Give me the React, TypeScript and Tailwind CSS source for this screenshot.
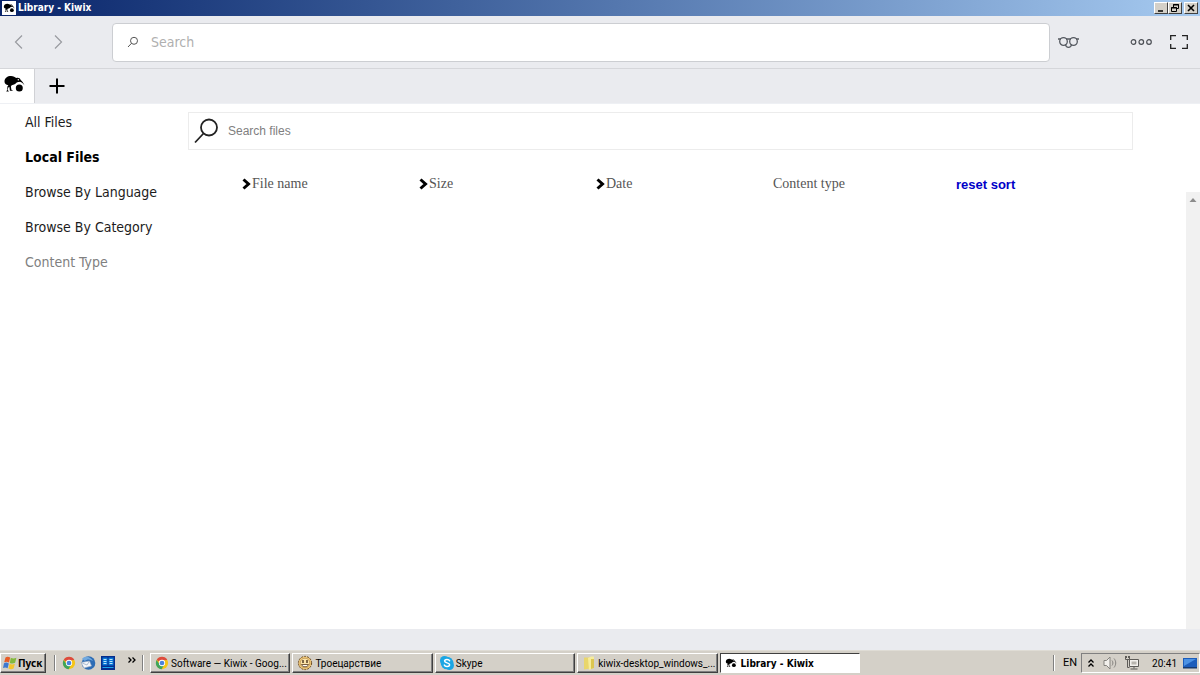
import { useState, type ReactNode } from 'react';

const SECTIONS = ['All Files', 'Local Files', 'Browse By Language', 'Browse By Category'];
const COLUMNS = ['File name', 'Size', 'Date'];

function KiwiIcon({ className }: { className?: string }) {
  return (
    <svg viewBox="0 0 22 18" className={className} aria-hidden="true">
      <path
        d="M1.500 6.500C1.500 3 4.500 1 8 1c2.500 0 4 1.600 5.500 2 1.500-.6 3.600 0 4.200 2 1.500 1.200 2.800 3 3.800 5.500-1.500-2-2.700-3.200-4.500-3.700-1.300.4-2.300 0-3.300.8C12.500 9 11 10 8.700 10.200l-.8 1.400.5 3.100 1.800 1H6.900l-.5-3.800-1.200.6-.5 2.600 1.300 1.400H3.200l1-1.500.2-3.500 1-1.300C3 9.500 1.500 8.800 1.500 6.500z"
        fill="#000"
      />
      <circle cx="16.300" cy="13" r="3.500" fill="#000" />
      <circle cx="15.300" cy="4.800" r="0.700" fill="#fff" />
    </svg>
  );
}

function ChromeIcon({ className }: { className?: string }) {
  return (
    <svg viewBox="0 0 16 16" className={className} aria-hidden="true">
      <circle cx="8" cy="8" r="7" fill="#f5c518" />
      <path d="M8 8 1.900 4.500A7 7 0 0 1 14.100 4.500L8 5z" fill="#dd4b3e" />
      <path d="M1.900 4.500A7 7 0 0 0 7.500 15L10.500 10 8 8 5 9z" fill="#3fa45b" />
      <circle cx="8" cy="8" r="3.600" fill="#fff" />
      <circle cx="8" cy="8" r="2.700" fill="#4a83dc" />
    </svg>
  );
}

function MonkeyIcon() {
  return (
    <svg viewBox="0 0 16 16" className="size-4 shrink-0" aria-hidden="true">
      <circle cx="8" cy="8" r="6.600" fill="#f0c878" stroke="#6b4a20" strokeWidth="1" strokeDasharray="2 1" />
      <circle cx="8" cy="8" r="4.800" fill="#fbe3a8" stroke="#a57a3a" strokeWidth="0.600" />
      <path d="M6 5v3M10 5v3" stroke="#3c2610" strokeWidth="1.300" />
      <path d="M4.500 9.500c1 3 6 3 7 0z" fill="#fff" stroke="#5b3a18" strokeWidth="0.800" />
    </svg>
  );
}

function SkypeIcon() {
  return (
    <svg viewBox="1 1 14 14" className="size-3.5 shrink-0" aria-hidden="true">
      <circle cx="5.500" cy="5.500" r="4.500" fill="#1ba6e4" />
      <circle cx="10.500" cy="10.500" r="4.500" fill="#1ba6e4" />
      <circle cx="8" cy="8" r="6.300" fill="#1ba6e4" />
      <path d="M10.600 5.800C10 4 5.600 3.900 5.600 6.100c0 2.200 5 1.300 5 3.700 0 2.300-4.600 2.300-5.300.3" fill="none" stroke="#fff" strokeWidth="1.500" strokeLinecap="round" />
    </svg>
  );
}

function FolderIcon() {
  return (
    <svg viewBox="0 1 14 14" className="size-3.5 shrink-0" aria-hidden="true">
      <path d="M2 2.500h6v11l-6 1z" fill="#e9d66b" />
      <path d="M6 3l3-1.500h3V13l-5 2z" fill="#f6ec9c" />
      <path d="M9 4h3v9l-3 1z" fill="#dcc650" />
    </svg>
  );
}

function SortArrow() {
  return (
    <svg viewBox="0 0 10 12" className="h-3 w-2.5 shrink-0" aria-hidden="true">
      <path d="M1.500 1.500 6.500 6 1.500 10.500" fill="none" stroke="#000" strokeWidth="3" />
    </svg>
  );
}

function CaptionButton({ label, children }: { label: string; children: ReactNode }) {
  return (
    <button
      aria-label={label}
      className="flex h-3 w-3.5 items-center justify-center border border-t-white border-r-[#404040] border-b-[#404040] border-l-white bg-[#d4d0c8]"
    >
      <svg viewBox="0 0 12 10" className="h-2.5 w-3 shrink-0" fill="none" stroke="#000" aria-hidden="true">
        {children}
      </svg>
    </button>
  );
}

interface TaskProps {
  label: string;
  icon: ReactNode;
  active?: boolean;
}

function Task({ label, icon, active }: TaskProps) {
  return (
    <button
      className={
        active
          ? "flex h-5 items-center gap-1 border border-t-[#404040] border-r-white border-b-white border-l-[#404040] bg-white px-1 text-left font-['DejaVu_Sans_Condensed','DejaVu_Sans',sans-serif] font-bold"
          : 'flex h-5 items-center gap-0.5 border border-t-white border-r-[#404040] border-b-[#404040] border-l-white bg-[#d4d0c8] pl-1 text-left shadow-[inset_-1px_-1px_0_#808080]'
      }
    >
      {icon}
      <span className="whitespace-nowrap">{label}</span>
    </button>
  );
}

function Separator() {
  return <div className="h-4 w-0.5 shrink-0 border-r border-l border-r-white border-l-[#808080]" />;
}

export default function App() {
  const [section, setSection] = useState('Local Files');
  const [query, setQuery] = useState('');

  return (
    <div className="flex min-h-screen flex-col bg-white font-['DejaVu_Sans_Condensed','DejaVu_Sans',sans-serif]">
      {/* Title bar */}
      <header className="flex h-4 items-center bg-linear-to-r from-[#0a246a] to-[#a6caf0] px-0.5">
        <div className="flex size-3.5 items-center justify-center bg-white">
          <KiwiIcon className="h-2.5 w-3" />
        </div>
        <h1 className="flex-1 pl-0.5 text-[10px] leading-4 font-bold text-white">Library - Kiwix</h1>
        <div className="flex">
          <CaptionButton label="Minimize">
            <path d="M3 8h5" strokeWidth="1.500" />
          </CaptionButton>
          <CaptionButton label="Restore">
            <path d="M4.500 4V1.500h5v4H8M4 2h6M2.500 4.500h5v4h-5zM2 5h6" />
          </CaptionButton>
          <div className="w-0.5" />
          <CaptionButton label="Close">
            <path d="M3 2l6 6M9 2 3 8" strokeWidth="1.600" />
          </CaptionButton>
        </div>
      </header>

      {/* Toolbar */}
      <div className="flex h-[53px] items-center border-b border-[#d5d6da] bg-[#eaebef]">
        <div className="flex w-28 shrink-0 gap-4 pl-2">
          <button aria-label="Back" className="flex size-6 items-center justify-center">
            <svg viewBox="0 0 24 24" className="size-6" fill="none" stroke="#999ba0" aria-hidden="true">
              <path d="M14 5.500 7.500 12l6.500 6.500" strokeWidth="1.200" />
            </svg>
          </button>
          <button aria-label="Forward" className="flex size-6 items-center justify-center">
            <svg viewBox="0 0 24 24" className="size-6" fill="none" stroke="#999ba0" aria-hidden="true">
              <path d="M7 5.500 13.500 12 7 18.500" strokeWidth="1.200" />
            </svg>
          </button>
        </div>
        <label className="flex h-[39px] flex-1 items-center gap-3 rounded-sm border border-[#ccced2] bg-white pl-3.5">
          <svg viewBox="0 0 12 12" className="size-3 shrink-0" fill="none" stroke="#555" aria-hidden="true">
            <circle cx="7" cy="4.800" r="3.500" />
            <path d="M4.500 7.300 1 11" />
          </svg>
          <input
            type="text"
            aria-label="Search"
            placeholder="Search"
            className="min-w-0 flex-1 bg-transparent text-sm outline-none placeholder:text-[#b0b0b0]"
          />
        </label>
        <div className="flex w-[150px] shrink-0 items-center pl-2">
          <button aria-label="Reading list">
            <svg viewBox="0 0 22 14" className="h-3.5 w-[22px]" fill="none" stroke="#555960" strokeWidth="1.300" aria-hidden="true">
              <circle cx="5.500" cy="6.500" r="3.800" />
              <circle cx="15.500" cy="6.500" r="3.800" />
              <path d="M0 4h3M18 4h3M8 4h5M7.500 9.500c.5 3.800 5.500 3.800 6 0" />
            </svg>
          </button>
          <button aria-label="Menu" className="mr-4 ml-auto">
            <svg viewBox="0 0 24 8" className="h-2 w-6" fill="none" stroke="#4b4e54" strokeWidth="1.200" aria-hidden="true">
              <circle cx="3.500" cy="4" r="2.300" />
              <circle cx="11.300" cy="4" r="2.300" />
              <circle cx="19" cy="4" r="2.300" />
            </svg>
          </button>
          <button aria-label="Full screen" className="mr-3">
            <svg viewBox="0 0 18 14" className="h-3.5 w-[18px]" fill="none" stroke="#222" strokeWidth="1.300" aria-hidden="true">
              <path d="M.7 5V.7H6M12 .7h5.300V5M17.300 9v4.300H12M6 13.300H.7V9" />
            </svg>
          </button>
        </div>
      </div>

      {/* Tabs */}
      <nav className="flex h-[34px] bg-[#eaebef]">
        <button aria-label="Library" className="flex w-[35px] justify-center border-r border-[#d0d1d5] bg-white pt-1.5 pr-1.5">
          <KiwiIcon className="h-[18px] w-[22px]" />
        </button>
        <button aria-label="New tab" className="flex items-center px-3.5">
          <svg viewBox="0 0 16 16" className="size-4" stroke="#000" strokeWidth="2" aria-hidden="true">
            <path d="M8 0.500v15M0.500 8h15" />
          </svg>
        </button>
      </nav>

      {/* Library */}
      <main className="flex flex-1 border-t border-[#eef0f4]">
        <aside className="w-[188px] shrink-0">
          <ul>
            {SECTIONS.map((name) => (
              <li key={name}>
                <button
                  onClick={() => setSection(name)}
                  className={section === name ? 'h-[35px] pl-[25px] text-sm font-bold text-black' : 'h-[35px] pl-[25px] text-sm text-[#1c1c1c]'}
                >
                  {name}
                </button>
              </li>
            ))}
            <li>
              <button className="h-[35px] pl-[25px] text-sm text-[#808080]">Content Type</button>
            </li>
          </ul>
        </aside>

        <section className="flex flex-1 flex-col pt-2 font-['Liberation_Sans',sans-serif]">
          <label className="mr-[67px] flex h-[38px] items-center border border-[#ececec] pl-[5px]">
            <svg viewBox="0 0 24 26" className="h-[26px] w-6 shrink-0" fill="none" stroke="#222" strokeWidth="1.800" aria-hidden="true">
              <circle cx="15" cy="9.500" r="8" />
              <path d="M9.500 15.500 1 24.500" />
            </svg>
            <input
              type="text"
              aria-label="Search files"
              placeholder="Search files"
              value={query}
              onChange={(e) => setQuery(e.target.value)}
              className="ml-2.5 min-w-0 flex-1 text-xs outline-none placeholder:text-[#808080]"
            />
          </label>

          <div className="flex h-[42px] pt-[13px] pr-[73px] pl-[54px]">
            <table className="h-[42px] w-full table-fixed text-left">
              <thead>
                <tr>
                  {COLUMNS.map((col) => (
                    <th key={col} className="font-['Liberation_Serif',serif] text-sm font-normal text-[#555]">
                      <button className="flex items-center">
                        <SortArrow />
                        {col}
                      </button>
                    </th>
                  ))}
                  <th className="font-['Liberation_Serif',serif] text-sm font-normal text-[#555]">Content type</th>
                  <th className="pl-1.5">
                    <button className="text-[13px] font-bold text-[#0000c8]">reset sort</button>
                  </th>
                </tr>
              </thead>
            </table>
          </div>

          <div className="flex flex-1 justify-end">
            <div className="w-3.5 bg-[#f1f1f1] pt-1.5">
              <svg viewBox="0 0 14 4" className="h-1 w-3.5" aria-hidden="true">
                <path d="M7 0l3.500 4h-7z" fill="#8c8c8c" />
              </svg>
            </div>
          </div>
        </section>
      </main>

      <div className="h-[21px] bg-[#eaebef]" />

      {/* Taskbar */}
      <footer className="flex h-[25px] items-center border-t border-[#dfdcd5] bg-[#d4d0c8] font-['Roboto','Liberation_Sans',sans-serif] text-[10px] text-black">
        <button className="flex h-5 w-[46px] shrink-0 items-center gap-px border border-t-white border-r-[#404040] border-b-[#404040] border-l-white pl-0.5 font-['Noto_Sans',sans-serif] font-bold shadow-[inset_-1px_-1px_0_#808080]">
          <svg viewBox="0 0 14 14" className="size-3.5 shrink-0" aria-hidden="true">
            <path d="M2.500 1.500C4 .5 5.500.7 7.200 1.500L6 6.500C4.500 5.500 3 5.500 1.200 6.300z" fill="#e85b25" />
            <path d="M7.800 1.800c1.600.9 3.600.9 5.600 0L12.100 6.700c-1.600.9-3.700.9-5.300.2z" fill="#83b93c" />
            <path d="M1 7.200c1.500-.8 3-.8 4.800.2l-1.200 4.800C3 11.200 1.500 11.200 0 12z" fill="#3e78d0" />
            <path d="M6.600 7.800c1.600.9 3.400.9 5.300 0l-1.300 4.700c-1.600.9-3.500.9-5.200 0z" fill="#f5c52c" />
          </svg>
          Пуск
        </button>
        <div className="ml-2 flex w-[92px] shrink-0 items-center">
          <Separator />
          <a href="#chrome" aria-label="Google Chrome" className="ml-1.5">
            <ChromeIcon className="size-3.5" />
          </a>
          <a href="#mail" aria-label="Thunderbird" className="ml-1">
            <svg viewBox="0 0 16 16" className="size-4" aria-hidden="true">
              <circle cx="8.500" cy="8" r="6.800" fill="#2e6db5" />
              <path d="M2 4c3-4 9-2 11 2-3-2-6-2-8 0z" fill="#71a9df" />
              <path d="M1 7.500 9.500 6l2 5L4 13z" fill="#f4f6fa" stroke="#9aabc2" strokeWidth="0.600" />
              <path d="M1 7.500 7 10l2.500-4" fill="none" stroke="#8fa3bf" strokeWidth="0.700" />
            </svg>
          </a>
          <a href="#commander" aria-label="Far Manager" className="ml-1">
            <svg viewBox="0 0 16 16" className="size-4" aria-hidden="true">
              <path d="M1 1h14v14H1z" fill="#062d8c" />
              <path d="M2.500 2.500h5v8h-5zM8.500 2.500h5v8h-5z" fill="#0878d8" />
              <path d="M3.500 4.500h3M3.500 6.500h3M3.500 8.500h3M9.500 4.500h3M9.500 6.500h3M9.500 8.500h3" stroke="#bde6fa" />
              <path d="M2.500 12.500h11" stroke="#1aa6ee" />
            </svg>
          </a>
          <button aria-label="More shortcuts" className="mb-1.5 ml-3">
            <svg viewBox="0 0 8 6" className="h-1.5 w-2" fill="none" stroke="#000" strokeWidth="1.300" aria-hidden="true">
              <path d="M.5.5 3 3 .5 5.500M4.500.5 7 3 4.500 5.500" />
            </svg>
          </button>
          <div className="ml-1.5">
            <Separator />
          </div>
        </div>
        <div className="ml-1 grid flex-1 grid-cols-5 gap-0.5">
          <Task label="Software — Kiwix - Goog..." icon={<ChromeIcon className="size-3.5 shrink-0" />} />
          <Task label="Троецарствие" icon={<MonkeyIcon />} />
          <Task label="Skype" icon={<SkypeIcon />} />
          <Task label="kiwix-desktop_windows_..." icon={<FolderIcon />} />
          <Task label="Library - Kiwix" icon={<KiwiIcon className="h-2.5 w-3 shrink-0" />} active />
        </div>
        <div className="flex w-[340px] shrink-0 items-center justify-end">
          <Separator />
          <span className="mr-1 ml-2 text-[11px]">EN</span>
          <div className="flex h-5 items-center border border-t-[#808080] border-r-white border-b-white border-l-[#808080] pr-0.5 pl-1.5">
            <button aria-label="Show hidden icons">
              <svg viewBox="0 0 6 8" className="h-2 w-1.5" fill="none" stroke="#000" strokeWidth="1.300" aria-hidden="true">
                <path d="M.5 3.500 3 1l2.500 2.500M.5 7.500 3 5l2.500 2.500" />
              </svg>
            </button>
            <svg viewBox="0 0 16 16" className="ml-2 size-4" fill="none" stroke="#85837f" aria-hidden="true">
              <path d="M2 5.500h2.500L8 2v12l-3.500-3.500H2z" fill="#f2f0ec" />
              <path d="M10 5.500c1.200 1.500 1.200 3.500 0 5M12 3.500c2.300 2.700 2.300 6.300 0 9" />
            </svg>
            <svg viewBox="0 0 16 16" className="ml-1.5 size-4" fill="none" stroke="#5e5c58" aria-hidden="true">
              <path d="M5.500 4.500h9v7h-9z" fill="#f2f0ec" />
              <path d="M7.500 6.500h5v3h-5z" fill="#b8b5ae" stroke="none" />
              <path d="M10 11.500v2M6.500 14h7M1.500 1v3.500h4V1M3.500 4.500v8h2M2.500 1v2M4.500 1v2" />
            </svg>
            <time className="ml-3">20:41</time>
            <svg viewBox="0 0 14 12" className="ml-1.5 h-3 w-3.5" aria-hidden="true">
              <path d="M0 1h14v9H0z" fill="#1c5dbb" />
              <path d="M1 2h12L1 9z" fill="#4c92e4" />
              <path d="M0 10h14v1.500H0z" fill="#173a70" />
            </svg>
          </div>
        </div>
      </footer>
    </div>
  );
}
